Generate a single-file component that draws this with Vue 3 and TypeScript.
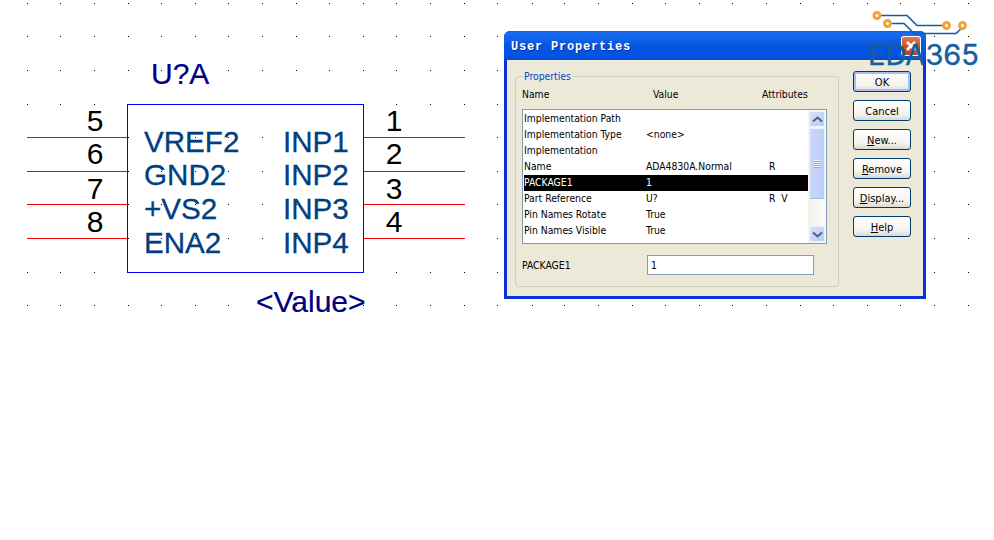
<script setup lang="ts">
const xs = [27, 60, 94, 128, 161, 195, 228, 262, 296, 329, 363, 396, 430, 464, 497, 532, 564, 598, 632, 665, 699, 732, 766, 800, 833, 867, 900, 934, 968]
const ys = [3, 36, 70, 104, 137, 171, 204, 238, 272, 305]
const dots = xs.flatMap((x) => ys.map((y) => ({ x, y })))

const pins = [
  { y: 137, left: 'VREF2', right: 'INP1', ln: '5', rn: '1', ty: 152, numY: 131 },
  { y: 171, left: 'GND2', right: 'INP2', ln: '6', rn: '2', ty: 185, numY: 164 },
  { y: 204, left: '+VS2', right: 'INP3', ln: '7', rn: '3', ty: 219, numY: 199 },
  { y: 238, left: 'ENA2', right: 'INP4', ln: '8', rn: '4', ty: 253, numY: 232 },
]

interface Row { name: string; value: string; attr: string; selected?: boolean }
const rows: Row[] = [
  { name: 'Implementation Path', value: '', attr: '' },
  { name: 'Implementation Type', value: '<none>', attr: '' },
  { name: 'Implementation', value: '', attr: '' },
  { name: 'Name', value: 'ADA4830A.Normal', attr: 'R' },
  { name: 'PACKAGE1', value: '1', attr: '', selected: true },
  { name: 'Part Reference', value: 'U?', attr: 'R  V' },
  { name: 'Pin Names Rotate', value: 'True', attr: '' },
  { name: 'Pin Names Visible', value: 'True', attr: '' },
]

const buttons = [
  { key: '', post: 'OK', primary: true },
  { key: '', post: 'Cancel' },
  { key: 'N', post: 'ew...' },
  { key: 'R', post: 'emove' },
  { key: 'D', post: 'isplay...' },
  { key: 'H', post: 'elp' },
]
</script>

<template>
  <div class="page">
    <svg class="schematic" width="994" height="540" viewBox="0 0 994 540">
      <rect v-for="d in dots" :key="d.x + '-' + d.y" :x="d.x" :y="d.y" width="1" height="1" fill="#000" />
      <rect x="127.5" y="104.5" width="236" height="168" fill="none" stroke="#0000ff" />
      <g v-for="p in pins" :key="p.ln">
        <line x1="27" :y1="p.y + 0.5" x2="127" :y2="p.y + 0.5" stroke="#f00000" />
        <line x1="364" :y1="p.y + 0.5" x2="465" :y2="p.y + 0.5" stroke="#f00000" />
        <text class="num" x="95" :y="p.numY" text-anchor="middle">{{ p.ln }}</text>
        <text class="num" x="394" :y="p.numY" text-anchor="middle">{{ p.rn }}</text>
        <text class="pin" x="144" :y="p.ty">{{ p.left }}</text>
        <text class="pin" x="283" :y="p.ty">{{ p.right }}</text>
      </g>
      <text class="ref" x="151" y="84">U?A</text>
      <text class="ref" x="256" y="312">&lt;Value&gt;</text>
    </svg>

    <div class="dialog">
      <div class="titlebar">
        <span class="title">User Properties</span>
        <span class="close">
          <svg width="20" height="20" viewBox="0 0 20 20">
            <path d="M6 6l8 8M14 6l-8 8" stroke="#fff" stroke-width="2.6" fill="none" />
          </svg>
        </span>
      </div>
      <div class="body">
        <fieldset class="group">
          <legend>Properties</legend>
          <div class="heads">
            <span class="h-name">Name</span>
            <span class="h-value">Value</span>
            <span class="h-attr">Attributes</span>
          </div>
          <div class="list">
            <div class="rows">
              <div v-for="r in rows" :key="r.name" class="row" :class="{ selected: r.selected }">
                <span class="c-name">{{ r.name }}</span>
                <span class="c-value">{{ r.value }}</span>
                <span class="c-attr">{{ r.attr }}</span>
              </div>
            </div>
            <div class="scroll">
              <div class="arrow">
                <svg width="11" height="7" viewBox="0 0 11 7"><path d="M1 5.5l4.5-4 4.5 4" fill="none" stroke="#4d6185" stroke-width="2" /></svg>
              </div>
              <div class="thumb">
                <svg width="7" height="8" viewBox="0 0 7 8">
                  <path d="M0 .5h7M0 2.5h7M0 4.5h7M0 6.5h7" stroke="#eef4fe" />
                  <path d="M0 1.5h7M0 3.5h7M0 5.5h7M0 7.5h7" stroke="#8fa9ea" />
                </svg>
              </div>
              <div class="track"></div>
              <div class="arrow">
                <svg width="11" height="7" viewBox="0 0 11 7"><path d="M1 1.5l4.5 4 4.5-4" fill="none" stroke="#4d6185" stroke-width="2" /></svg>
              </div>
            </div>
          </div>
          <div class="edit">
            <span class="edit-label">PACKAGE1</span>
            <span class="edit-input">1</span>
          </div>
        </fieldset>
        <div class="buttons">
          <button v-for="b in buttons" :key="b.post" class="btn" :class="{ primary: b.primary }">
            <u v-if="b.key">{{ b.key }}</u>{{ b.post }}
          </button>
        </div>
      </div>
    </div>

    <svg class="logo" width="116" height="64" viewBox="0 0 116 64">
      <g fill="none" stroke="#0f5ca8" stroke-width="1.6">
        <path d="M9 6.5H39L49 16.5H74" />
        <path d="M24 14.5H36L46 24.5H88L94 19" />
      </g>
      <g fill="#fff" stroke="#f2a32f" stroke-width="3">
        <circle cx="9" cy="6.5" r="3" />
        <circle cx="19.5" cy="14.5" r="3" />
        <circle cx="78.5" cy="16.5" r="3" />
        <circle cx="94.5" cy="16.5" r="3" />
      </g>
      <text class="logo-text" x="0" y="56">EDA365</text>
    </svg>
  </div>
</template>

<style>
html, body { margin: 0; background: #fff; }
</style>

<style scoped>
.page {
  position: relative;
  width: 994px;
  height: 540px;
  overflow: hidden;
  background: #fff;
}
.schematic { display: block; }
.num {
  font: 30px "Liberation Sans", Arial, sans-serif;
  fill: #000;
}
.pin {
  font: 29.6px "Liberation Sans", Arial, sans-serif;
  fill: #004080;
  stroke: #004080;
  stroke-width: 0.3;
}
.ref {
  font: 30px "Liberation Sans", Arial, sans-serif;
  fill: #000080;
  stroke: #000080;
  stroke-width: 0.2;
}
.dialog {
  position: absolute;
  left: 504px;
  top: 31px;
  width: 422px;
  height: 268px;
  box-sizing: border-box;
  display: flex;
  flex-direction: column;
  background: #0831d9;
  border-radius: 6px 6px 0 0;
  font: 10.3px "DejaVu Sans Condensed", "DejaVu Sans", sans-serif;
  color: #000;
}
.titlebar {
  height: 29px;
  flex: none;
  display: flex;
  align-items: center;
  justify-content: space-between;
  padding: 0 5px 0 7px;
  border-radius: 6px 6px 0 0;
  background: linear-gradient(#0a5fe0 0, #1a6cf0 8%, #0355e0 55%, #0553e6 85%, #024bd0 100%);
}
.title {
  color: #fff;
  font: bold 12px "Liberation Mono", monospace;
  letter-spacing: 0.8px;
  text-shadow: 1px 1px 0 #0a2fa0;
  margin-top: 2px;
}
.close {
  width: 20px;
  height: 20px;
  display: block;
  margin-top: 1px;
  border-radius: 3px;
  background: linear-gradient(#e07a5c, #d04e28 60%, #c8401c);
  box-shadow: inset 0 0 0 1px #fff;
}
.close svg { display: block; }
.body {
  flex: 1;
  display: flex;
  margin: 0 3px 3px 3px;
  background: #ece9d8;
  padding: 10px 0 0 8px;
}
.group {
  width: 324px;
  height: 217px;
  box-sizing: border-box;
  margin: 0;
  padding: 0 0 0 6px;
  border: 1px solid #d0d0bf;
  border-radius: 4px;
  min-width: 0;
}
.group legend {
  color: #0046d5;
  padding: 0 2px;
  margin-left: 0;
  line-height: 13px;
}
.heads {
  display: flex;
  height: 14px;
  line-height: 14px;
  margin-top: 4px;
}
.h-name { width: 131px; }
.h-value { width: 109px; }
.list {
  display: flex;
  width: 305px;
  height: 135px;
  box-sizing: border-box;
  margin-top: 8px;
  border: 1px solid #7f9db9;
  background: #fff;
}
.rows {
  flex: 1;
  padding: 1px 0 0 1px;
}
.row {
  display: flex;
  height: 16px;
  line-height: 15px;
}
.row.selected {
  background: #000;
  color: #fff;
}
.c-name { width: 122px; }
.c-value { width: 123px; }
.c-attr { white-space: pre; }
.scroll {
  width: 18px;
  box-sizing: border-box;
  display: flex;
  flex-direction: column;
  background: linear-gradient(90deg, #f3f1ec, #fbfaf7);
  padding: 1px;
}
.arrow {
  height: 16px;
  flex: none;
  display: flex;
  align-items: center;
  justify-content: center;
  background: linear-gradient(135deg, #d6e2fb, #b8cbf6);
  border: 1px solid #eef3fd;
  box-sizing: border-box;
  border-radius: 2px;
}
.thumb {
  height: 71px;
  flex: none;
  margin-top: 1px;
  display: flex;
  align-items: center;
  justify-content: center;
  background: linear-gradient(90deg, #c9d8fa, #bccdf8);
  border: 1px solid #eef3fd;
  border-bottom-color: #a6bce8;
  box-sizing: border-box;
  border-radius: 2px;
}
.track { flex: 1; }
.edit {
  display: flex;
  align-items: center;
  margin-top: 11px;
}
.edit-label {
  width: 125px;
  margin-top: -1px;
}
.edit-input {
  width: 167px;
  height: 20px;
  box-sizing: border-box;
  line-height: 18px;
  padding-left: 3px;
  border: 1px solid #7f9db9;
  background: #fff;
}
.buttons {
  display: flex;
  flex-direction: column;
  gap: 8px;
  margin-left: 14px;
  margin-top: 1px;
}
.btn {
  width: 58px;
  height: 21px;
  padding: 1px 0 0;
  box-sizing: border-box;
  border: 1px solid #003c74;
  border-radius: 3px;
  background: linear-gradient(#ffffff, #f4f3ee 70%, #dcd8ce);
  font: inherit;
  font-size: 11px;
  color: #000;
}
.btn.primary {
  box-shadow: inset 0 0 0 2px #a9bdee;
}
.logo {
  position: absolute;
  left: 868px;
  top: 9px;
}
.logo-text {
  font: 29px Inter, "Open Sans", sans-serif;
  fill: #14609f;
  stroke: #14609f;
  stroke-width: 0.4;
}
</style>
